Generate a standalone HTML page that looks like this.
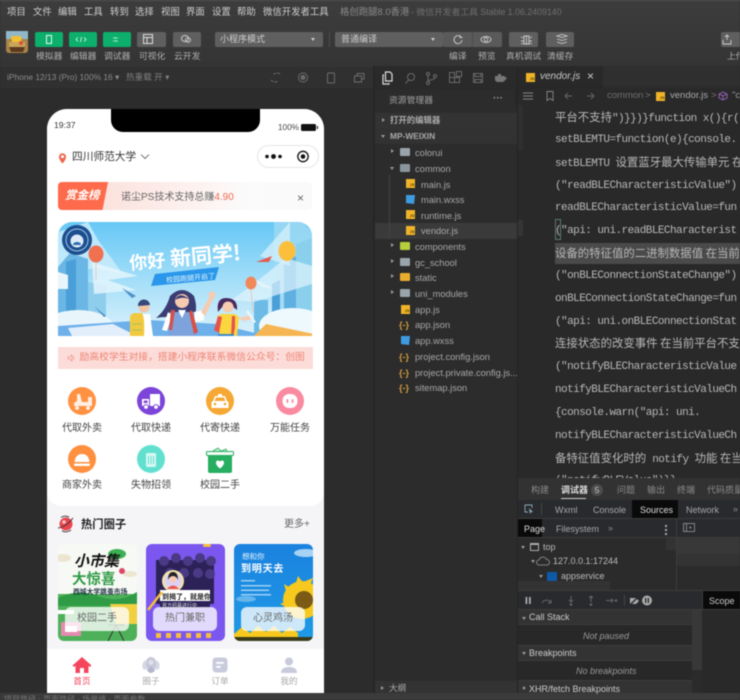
<!DOCTYPE html>
<html lang="zh-CN"><head><meta charset="utf-8"><title>微信开发者工具</title>
<style>
*{box-sizing:border-box;margin:0;padding:0}
html,body{width:740px;height:700px;overflow:hidden;background:#2c2c2c}
body{font-family:"Liberation Sans","Noto Sans CJK SC",sans-serif;position:relative;font-size:10px;color:#bbb}
#r{position:absolute;left:0;top:0;width:740px;height:700px;overflow:hidden;filter:blur(.4px)}
.a{position:absolute;white-space:nowrap;line-height:1}
.b{position:absolute}
.m{top:7px;font-size:9.4px;color:#cfcfcf}
.btn{position:absolute;top:32px;height:15px;border-radius:2px}
.g{background:#0cb06c}.k{background:#5f5f5f}
.l{top:52px;font-size:8.8px;color:#b0b0b0}
.f{position:absolute;font-size:9.3px;color:#a8a8a8;white-space:nowrap;line-height:12px;margin-top:1px}
.js{position:absolute;width:9px;height:9px;background:#f0b429;color:#5a4200;font-size:4px;line-height:11px;text-align:right;font-weight:bold;padding-right:.5px}
.dir{position:absolute;width:10px;height:8px;background:#99a4aa;border-radius:1px}
.ar{position:absolute;width:0;height:0;border-left:3px solid #999;border-top:2.5px solid transparent;border-bottom:2.5px solid transparent}
.ad{position:absolute;width:0;height:0;border-top:3px solid #999;border-left:2.5px solid transparent;border-right:2.5px solid transparent}
.br{position:absolute;font-size:9px;color:#d09c3c;font-weight:bold;line-height:12px;margin-top:1px}
.c{position:absolute;left:555px;font-family:"Liberation Mono","Noto Sans CJK SC",monospace;font-size:11px;letter-spacing:-.55px;color:#b8b8b8;white-space:nowrap;line-height:14px}
.c b{font-family:"Noto Sans CJK SC",sans-serif;font-weight:400;font-size:11.4px;letter-spacing:0}
.ic{position:absolute;width:28px;height:28px;border-radius:50%}
.lb{position:absolute;width:50px;text-align:center;font-size:10px;color:#444;line-height:12px}
.card{position:absolute;top:544px;width:79px;height:97px;border-radius:6px;overflow:hidden}
.ov{position:absolute;left:7px;top:63px;width:64px;height:24px;border-radius:6px;background:rgba(255,255,255,.78);text-align:center;line-height:24px;font-size:10px;color:#666}
.t{position:absolute;width:40px;text-align:center;font-size:8.6px;line-height:10px;color:#a8a8a8;top:676px}
.d{position:absolute;font-size:9px;color:#a8a8a8;white-space:nowrap;line-height:12px}
</style></head><body><div id="r">

<!-- top chrome -->
<div class="b" style="left:0;top:0;width:740px;height:67px;background:linear-gradient(#3d3d3d,#343434)"></div>
<div class="b" style="left:0;top:0;width:740px;height:1px;background:#555"></div>
<span class="a m" style="left:7px">项目</span><span class="a m" style="left:33px">文件</span><span class="a m" style="left:58px">编辑</span><span class="a m" style="left:84px">工具</span><span class="a m" style="left:110px">转到</span><span class="a m" style="left:135px">选择</span><span class="a m" style="left:161px">视图</span><span class="a m" style="left:186px">界面</span><span class="a m" style="left:212px">设置</span><span class="a m" style="left:237px">帮助</span><span class="a m" style="left:263px">微信开发者工具</span>
<span class="a m" style="left:340px;color:#8a8a8a">格创跑腿8.0香港</span>
<span class="a m" style="left:411px;color:#6f6f6f;font-size:8.8px;top:8px">- 微信开发者工具 Stable 1.06.2409140</span>

<!-- avatar -->
<svg class="b" style="left:6px;top:31px" width="22" height="22" viewBox="0 0 22 22"><rect width="22" height="22" rx="3" fill="#a8844a"/><rect y="0" width="22" height="8" fill="#8fb7c9"/><path d="M5 5h10l1 6H6z" fill="#f0c030"/><rect x="3" y="11" width="16" height="5" fill="#c9a55a"/><path d="M3 16h16l-2 5H5z" fill="#5c3a20"/><circle cx="15" cy="12" r="2" fill="#d9503c"/></svg>

<div class="btn g" style="left:35px;width:28px"></div>
<div class="btn g" style="left:69px;width:28px"></div>
<div class="btn g" style="left:103px;width:28px"></div>
<div class="btn k" style="left:137px;width:29px"></div>
<div class="btn k" style="left:173px;width:28px"></div>
<svg class="b" style="left:35px;top:32px" width="166" height="15" viewBox="0 0 166 15" fill="none" stroke="#e8f8f0" stroke-width="1">
<rect x="11.5" y="3.5" width="5" height="8"/>
<path d="M43 5.5l-2 2 2 2M46.500 5l-1 5M49 5.500l2 2-2 2" stroke-width=".8"/>
<path d="M78 6h5M83 9h-5M80 5v2M81 8v2" stroke-width=".7" opacity=".8"/>
<rect x="108.500" y="2.500" width="9" height="9" stroke="#ddd"/><path d="M108.500 5.500h9M112 5.500v6" stroke="#ddd"/>
<ellipse cx="150" cy="6.500" rx="3.500" ry="3" stroke="#ccc"/><ellipse cx="153" cy="8" rx="2.500" ry="2.200" stroke="#ccc"/>
</svg>
<span class="a l" style="left:36px">模拟器</span><span class="a l" style="left:70px">编辑器</span><span class="a l" style="left:104px">调试器</span><span class="a l" style="left:139px">可视化</span><span class="a l" style="left:174px">云开发</span>

<div class="btn k" style="left:215px;width:108px"></div>
<span class="a" style="left:220px;top:35px;font-size:9px;color:#ccc">小程序模式</span>
<div class="b" style="left:311px;top:38px;border-top:3px solid #ccc;border-left:2px solid transparent;border-right:2px solid transparent"></div>
<div class="b" style="left:329px;top:32px;width:1px;height:15px;background:#4c4c4c"></div>
<div class="btn k" style="left:335px;width:108px"></div>
<span class="a" style="left:341px;top:35px;font-size:9px;color:#ccc">普通编译</span>
<div class="b" style="left:431px;top:38px;border-top:3px solid #ccc;border-left:2px solid transparent;border-right:2px solid transparent"></div>
<div class="btn" style="left:443px;width:59px;background:#5a5a5a"></div>
<div class="b" style="left:472px;top:32px;width:1px;height:15px;background:#4c4c4c"></div>
<div class="btn k" style="left:509px;width:29px"></div>
<div class="btn k" style="left:546px;width:28px"></div>
<div class="btn k" style="left:721px;width:25px"></div>
<svg class="b" style="left:443px;top:32px" width="297" height="15" viewBox="0 0 297 15" fill="none" stroke="#ccc" stroke-width=".9">
<path d="M18 5a4 4 0 1 0 1 3M17 3v2.500h2.500"/>
<ellipse cx="43" cy="7.500" rx="5" ry="3"/><circle cx="43" cy="7.500" r="1.800"/>
<path d="M81 4h5v8h-5zM81 6l-3-1M81 9h-3M81 11l-3 1M86 6l3-1M86 9h3M86 11l3 1M83.500 4v8"/>
<path d="M114 4l5-1.500 5 1.500-5 1.500zM114 7l5 1.500 5-1.500M114 10l5 1.500 5-1.500"/>
<path d="M284 8v-5M282 5l2-2 2 2M280 8v4h8V8"/>
</svg>
<span class="a l" style="left:449px">编译</span><span class="a l" style="left:478px">预览</span><span class="a l" style="left:506px">真机调试</span><span class="a l" style="left:547px">清缓存</span><span class="a l" style="left:727px">上传</span>

<!-- device bar -->
<div class="b" style="left:0;top:67px;width:373px;height:21px;background:#303030"></div>
<span class="a" style="left:7px;top:73px;font-size:8.4px;color:#8b8b8b">iPhone 12/13 (Pro) 100% 16 ▾</span>
<span class="a" style="left:126px;top:73px;font-size:8.6px;color:#7f7f7f">热重载 开 ▾</span>
<svg class="b" style="left:265px;top:68px" width="105" height="19" viewBox="0 0 105 19" fill="none" stroke="#6c6c6c" stroke-width="1">
<path d="M15 6a5 5 0 0 0-7 1M6 12a5 5 0 0 0 7 1" stroke-dasharray="3 1"/>
<circle cx="38" cy="9.500" r="4.500"/><circle cx="38" cy="9.500" r="2" fill="#6c6c6c"/>
<rect x="62.500" y="5" width="7" height="10" rx="1"/>
<rect x="89.500" y="8" width="7" height="6"/><path d="M92 8V5.500h7V11h-2.500"/>
</svg>

<!-- simulator backdrop -->
<div class="b" style="left:0;top:88px;width:373px;height:605px;background:#2c2c2c"></div>
<div class="b" style="left:0;top:693px;width:740px;height:7px;background:#3b3b3b"></div>
<span class="a" style="left:4px;top:696px;font-size:8px;color:#777">项目路径 · 页面路径 · 场景值 · 页面参数</span>

<!-- phone -->
<div class="b" style="left:47px;top:109px;width:277px;height:584px;background:#f5f5f8;border-radius:20px 20px 0 0;overflow:hidden">
  <div class="b" style="left:0;top:0;width:277px;height:397px;background:#fff;border-radius:0 0 14px 14px"></div>
  <div class="b" style="left:0;top:540px;width:277px;height:44px;background:#fff"></div>
</div>
<div class="b" style="left:111px;top:109px;width:149px;height:23px;background:#000;border-radius:0 0 12px 12px"></div>
<span class="a" style="left:54px;top:121px;font-size:8.6px;color:#333">19:37</span>
<span class="a" style="left:278px;top:124px;font-size:8.2px;color:#444">100%</span>
<div class="b" style="left:301px;top:123.500px;width:15px;height:7px;background:#111;border:1px solid #111;border-radius:1.500px"></div>
<div class="b" style="left:316.500px;top:125.500px;width:1px;height:3px;background:#111"></div>

<svg class="b" style="left:58px;top:152px" width="9" height="12" viewBox="0 0 9 12"><path d="M4.500 11.500C2 8.500 1 6.800 1 4.700a3.500 3.500 0 0 1 7 0c0 2.100-1 3.800-3.500 6.800z" fill="#f0664d"/><circle cx="4.500" cy="4.600" r="1.500" fill="#fff"/></svg>
<span class="a" style="left:72px;top:152px;font-size:10.700px;color:#333">四川师范大学</span>
<svg class="b" style="left:140px;top:153px" width="10" height="7" viewBox="0 0 10 7" fill="none" stroke="#555" stroke-width=".8"><path d="M1 1.500l4 4 4-4"/></svg>
<div class="b" style="left:257px;top:145px;width:62px;height:23px;border-radius:12px;background:#fff;border:1px solid #e6e6e6"></div>
<svg class="b" style="left:262px;top:148px" width="54" height="17" viewBox="0 0 54 17"><circle cx="5" cy="8.500" r="1.800" fill="#111"/><circle cx="11.500" cy="8.500" r="2.400" fill="#111"/><circle cx="18" cy="8.500" r="1.800" fill="#111"/><circle cx="41" cy="8.500" r="5.200" fill="none" stroke="#111" stroke-width="1.300"/><circle cx="41" cy="8.500" r="2.300" fill="#111"/></svg>

<!-- rank bar -->
<div class="b" style="left:58px;top:182px;width:254px;height:28px;border-radius:4px;background:linear-gradient(90deg,#fce2dd 18%,#fdf0ee 50%,#fbfbfb 75%,#fafafa)"></div>
<div class="b" style="left:58px;top:182px;width:50px;height:28px;background:#fd6b4c;border-radius:4px 0 0 4px;clip-path:polygon(0 0,100% 0,89% 100%,0 100%)"></div>
<span class="a" style="left:65px;top:191px;font-size:11.500px;color:#fff;font-weight:bold;font-style:italic">赏金榜</span>
<span class="a" style="left:121px;top:192.500px;font-size:10px;color:#666">诺尘PS技术支持总赚<span style="color:#ef6a50">4.90</span></span>
<span class="a" style="left:297px;top:192px;font-size:12px;color:#666">×</span>

<!-- banner -->
<svg class="b" style="left:58px;top:222px" width="254" height="114" viewBox="0 0 254 114">
<defs><linearGradient id="sky" x1="0" y1="0" x2="0" y2="1"><stop offset="0" stop-color="#66c8f5"/><stop offset=".6" stop-color="#aee2f9"/><stop offset="1" stop-color="#dcf2fc"/></linearGradient>
<clipPath id="bc"><path d="M14 0H240a14 14 0 0 1 14 14V114H0V14A14 14 0 0 1 14 0z"/></clipPath></defs>
<g clip-path="url(#bc)">
<rect width="254" height="114" fill="url(#sky)"/>
<path d="M0 10L30 0l10 18 25 34-28-6-37 8z" fill="#c8ecfb" opacity=".85"/>
<path d="M0 45l12-14 18 6v77H0z" fill="#6ab6e4"/><path d="M8 40l10-3v77H8z" fill="#4a9fd8"/><path d="M30 60l18 4v50H30z" fill="#8fcdec"/><path d="M0 50l10 3v14H0z" fill="#e8f6fb"/>
<path d="M216 0h28l10 10v104h-38z" fill="#9fdaf2" opacity=".8"/><path d="M226 40l16-8v82h-16z" fill="#5fb0e0"/><path d="M238 22l16-6v98h-16z" fill="#8ad0ec"/><path d="M214 62l8-4v56h-8z" fill="#4a9fd8"/><path d="M196 78h14v36h-14z" fill="#6cbae6"/>
<path d="M254 62l-58 18-22-2 24-18 30-24 26 8z" fill="#dff4fc" opacity=".7"/><path d="M232 0l-30 34 30 10z" fill="#dbf2fb" opacity=".7"/>
<path d="M34 40l46 14-30 4 28 10-42 4z" fill="#e6f6fc" opacity=".8"/>
<ellipse cx="20" cy="106" rx="36" ry="18" fill="#e8f6fc"/><ellipse cx="235" cy="104" rx="34" ry="18" fill="#eef9fd"/>
<path d="M0 104l90-6 70 4 50 12H0z" fill="#6db0ea"/><path d="M10 106l45-4 24 12H14z" fill="#fff" opacity=".8"/>
<path d="M196 114l12-12 48 10v2z" fill="#f6b553"/>
<path d="M64 66l14 8-4 2-10-10zM36 84l12 10-2 1z" fill="#4f8fc8"/><path d="M196 57l20 10-12-2z" fill="#e5f4fb"/><path d="M198 40l16-6-3 6z" fill="#e65c4d"/>
<ellipse cx="38" cy="32" rx="7.500" ry="8.500" fill="#ef7150"/><path d="M38 40v18" stroke="#e9b39c" stroke-width=".6" fill="none"/>
<ellipse cx="229" cy="29" rx="8.500" ry="10" fill="#fbbf3c"/>
<ellipse cx="193" cy="61" rx="5.500" ry="6.500" fill="#f0885a"/><path d="M193 68l2 22" stroke="#e9b39c" stroke-width=".6" fill="none"/>
<circle cx="19" cy="18" r="15" fill="#1d4e8e"/><circle cx="19" cy="18" r="11" fill="none" stroke="#9cc9e8" stroke-width="1"/><circle cx="19" cy="19" r="6.500" fill="#dcebf7"/><path d="M15 23c0-4 8-4 8 0z" fill="#2d6cb0"/>
<g transform="rotate(-5 125 35)" font-family="Noto Sans CJK SC,sans-serif" font-weight="bold" fill="#fff"><text x="71" y="43" font-size="18">你好</text><text x="112" y="43" font-size="21">新同学!</text></g>
<path d="M97 52l64-7-4 13-64 6z" fill="#2a97ea"/>
<text x="108" y="59" font-size="7" fill="#dff3ff" transform="rotate(-5 125 55)" font-family="Noto Sans CJK SC,sans-serif">校园跑腿开启了</text>
<!-- boy -->
<circle cx="86" cy="85" r="5.500" fill="#f2c4a6"/><path d="M80 84a6 6 0 0 1 12-1z" fill="#35487a"/><path d="M80 92h12l3 22H79z" fill="#fff"/><path d="M72 96q0-5 6-5h6q3 5 2 23H72z" fill="#f1c93f"/><path d="M74 102h10M74 108h10" stroke="#a5c45a" stroke-width="1"/>
<!-- girl -->
<path d="M112 74q12-12 24 0 5 16-2 22h-18q-8-2-18 0 10-8 14-22z" fill="#3a3d74"/><circle cx="124" cy="79" r="7" fill="#f6cbb0"/><path d="M117 78q4-9 14-1-7-3-14 1z" fill="#3a3d74"/>
<path d="M112 90h24l2 24h-28z" fill="#7ea2dc"/><path d="M120 88h8l-4 8z" fill="#fff"/><path d="M110 90l-6 18 5 1 5-16zM136 90l10-2 0 10-9 2z" fill="#fff"/><path d="M134 88l6 22-4 2-5-22zM113 88l-2 20 3 0 3-20z" fill="#d84f45"/><path d="M143 90l9-16 4 1-9 19z" fill="#f6cbb0"/><circle cx="154" cy="73" r="3.500" fill="#f6cbb0"/>
<!-- girl 2 -->
<path d="M160 90q-2-14 8-14 12 0 11 12l-5-4h-9z" fill="#4a2a5e"/><circle cx="170" cy="85" r="5.500" fill="#f6cbb0"/><path d="M159 95l4-3h14l4 3-2 19h-17z" fill="#fcd63f"/><path d="M160 94l-4 14 5 3 3-16zM177 94v12l-2 8-2 0 1-20z" fill="#e5544a"/><path d="M160 114h16v-2h-16z" fill="#3a8ac8"/><path d="M180 96l10-2-1-3 5 6-8 2z" fill="#f6cbb0"/><path d="M190 88l8 12-2 1-8-11z" fill="#eaf6fb"/>
</g></svg>

<!-- notice -->
<div class="b" style="left:58px;top:347px;width:255px;height:22px;background:#fcdcd8;overflow:hidden">
<svg class="b" style="left:9px;top:7px" width="9" height="8" viewBox="0 0 9 8" fill="none" stroke="#f0998c" stroke-width=".8"><path d="M1 3h1.500L5 1v6L2.500 5H1zM6.500 2.500q1 1.500 0 3" /></svg>
<span class="a" style="left:21.500px;top:6px;font-size:9.800px;color:#ee8577">励高校学生对接，搭建小程序联系微信公众号：创图</span></div>

<!-- icons -->
<div class="ic" style="left:68px;top:387px;background:#ff9142"></div>
<svg class="b" style="left:68px;top:387px" width="28" height="28" viewBox="0 0 28 28" fill="#fff" opacity=".85"><path d="M9 7l3 0 2 8h6v-5h4v9H6v-3l3-2zM9 19a2 2 0 1 0 .1 0zM20 19a2 2 0 1 0 .1 0z"/></svg>
<div class="ic" style="left:137px;top:387px;background:#7d44d9"></div>
<svg class="b" style="left:137px;top:387px" width="28" height="28" viewBox="0 0 28 28"><path d="M13 7h10v12H13z" fill="#fff"/><path d="M5 12h7v7H5z" fill="#fff"/><circle cx="9" cy="20" r="2.400" fill="#fff" stroke="#7d44d9"/><circle cx="19" cy="20" r="2.400" fill="#fff" stroke="#7d44d9"/><path d="M7 13.500h3.500v2.500H6.500z" fill="#7d44d9"/></svg>
<div class="ic" style="left:206px;top:387px;background:#f5a833"></div>
<svg class="b" style="left:206px;top:387px" width="28" height="28" viewBox="0 0 28 28"><path d="M12 7h4v2h-4zM9 9h10l2 5 1.500 1v6H5.500v-6L7 14z" fill="#fff"/><path d="M10 10.500h8l1.300 3.500H8.700z" fill="#f5a833"/><circle cx="9" cy="17" r="1.300" fill="#f5a833"/><circle cx="19" cy="17" r="1.300" fill="#f5a833"/></svg>
<div class="ic" style="left:276px;top:387px;background:#f98aa0"></div>
<svg class="b" style="left:276px;top:387px" width="28" height="28" viewBox="0 0 28 28"><rect x="6.500" y="7" width="15" height="14" rx="6.500" fill="#fff"/><rect x="10.500" y="12" width="1.800" height="4" rx=".9" fill="#f98aa0"/><rect x="15.700" y="12" width="1.800" height="4" rx=".9" fill="#f98aa0"/></svg>
<div class="ic" style="left:68px;top:445px;background:#ff903f"></div>
<svg class="b" style="left:68px;top:445px" width="28" height="28" viewBox="0 0 28 28" fill="#fff"><path d="M6.500 17q1-8 7.500-8t7.500 8z"/><rect x="6" y="18.500" width="16" height="2.500" rx="1"/></svg>
<div class="ic" style="left:137px;top:445px;background:#62e0cf"></div>
<svg class="b" style="left:137px;top:445px" width="28" height="28" viewBox="0 0 28 28"><rect x="9" y="8" width="10" height="14" rx="1.500" fill="#fff" opacity=".75"/><path d="M12 8V6h4v2M11.500 11v8M14 11v8M16.500 11v8" stroke="#62e0cf" fill="none"/></svg>
<svg class="b" style="left:206px;top:445px" width="28" height="29" viewBox="0 0 28 29"><path d="M7 6l5-3 3 3 5-2 2 4H6z" fill="#bfeed4" stroke="#27ae60" stroke-width=".8"/><rect x="0.500" y="6.500" width="27" height="4" rx="1" fill="#f3fbf6" stroke="#27ae60"/><path d="M2 10h24v16a2 2 0 0 1-2 2H4a2 2 0 0 1-2-2z" fill="#27ae60"/><path d="M14 23.500c-5-3.500-5-8-2-8 1 0 1.700.6 2 1.300.3-.7 1-1.300 2-1.300 3 0 3 4.500-2 8z" fill="#fff"/></svg>
<span class="lb" style="left:57px;top:422.500px">代取外卖</span><span class="lb" style="left:126px;top:422.500px">代取快递</span><span class="lb" style="left:195px;top:422.500px">代寄快递</span><span class="lb" style="left:265px;top:422.500px">万能任务</span>
<span class="lb" style="left:57px;top:479.500px">商家外卖</span><span class="lb" style="left:126px;top:479.500px">失物招领</span><span class="lb" style="left:195px;top:479.500px">校园二手</span>

<!-- hot -->
<svg class="b" style="left:57px;top:515px" width="18" height="18" viewBox="0 0 18 18"><circle cx="9" cy="9" r="6.500" fill="#e8464e"/><path d="M1 13Q9 12 16 3" fill="none" stroke="#333" stroke-width="1"/><path d="M4 2.500a8 8 0 0 1 8-.5M14 15a8 8 0 0 1-9 .8" fill="none" stroke="#444" stroke-width="1"/><circle cx="7" cy="7" r="1.800" fill="#f9c6c8"/></svg>
<span class="a" style="left:81px;top:519.500px;font-size:11.300px;font-weight:bold;color:#222">热门圈子</span>
<span class="a" style="left:284px;top:519.500px;font-size:10px;color:#666">更多+</span>

<div class="card" style="left:58px;background:#f7f9f4">
<svg class="b" style="left:0;top:0" width="79" height="97" viewBox="0 0 79 97">
<rect y="50" width="79" height="47" fill="#4fb05a"/><path d="M0 54q20-10 40-2t39-4v14H0z" fill="#2f9b45"/><path d="M52 60h27v20H58z" fill="#f0d040"/><path d="M0 66h16v4h-16z" fill="#fff"/><rect x="3" y="78" width="20" height="14" fill="#e58ab0"/><rect x="7" y="82" width="12" height="6" fill="#fff"/><path d="M50 97l8-16 8 16M50 81h16" stroke="#333" fill="none"/>
<ellipse cx="5" cy="14" rx="8" ry="4" fill="#ece6d0"/><ellipse cx="72" cy="30" rx="7" ry="3" fill="#ece6d0"/><ellipse cx="59" cy="10" rx="9" ry="5" fill="#3cb054"/>
<text x="16" y="22" font-size="15" font-weight="bold" fill="#111" font-style="italic" font-family="Noto Sans CJK SC,sans-serif">小市集</text>
<text x="14" y="40" font-size="14.500" font-weight="bold" fill="#2f9b45" font-family="Noto Sans CJK SC,sans-serif">大惊喜</text>
<text x="15" y="50" font-size="6.800" font-weight="bold" fill="#234" font-family="Noto Sans CJK SC,sans-serif">西城大学跳蚤市场</text>
<circle cx="64" cy="27" r="3" fill="#e0456a"/></svg>
<div class="ov">校园二手</div></div>

<div class="card" style="left:146px;background:#7b57f0">
<svg class="b" style="left:0;top:0" width="79" height="97" viewBox="0 0 79 97">
<rect x="10" y="16" width="58" height="44" fill="#2c2258"/>
<g fill="#4a3a85"><circle cx="18" cy="17" r="5"/><circle cx="30" cy="14" r="5"/><circle cx="42" cy="17" r="5"/><circle cx="54" cy="14" r="5"/><circle cx="65" cy="17" r="5"/><circle cx="24" cy="29" r="5"/><circle cx="38" cy="29" r="5"/><circle cx="52" cy="29" r="5"/><circle cx="64" cy="30" r="5"/></g>
<circle cx="27" cy="37" r="11" fill="#f0e4a8"/><circle cx="27" cy="37" r="8.500" fill="#ddd0f5"/><circle cx="27" cy="35" r="3.500" fill="#f6cbb0"/><path d="M22 36q0-8 5-8t5 8l-1-2q-4-4-8 0z" fill="#222"/><path d="M21 45q6-7 12 0z" fill="#e55"/>
<rect x="14" y="46" width="50" height="11" fill="#fff"/><text x="16" y="55" font-size="7" font-weight="bold" fill="#222" font-family="Noto Sans CJK SC,sans-serif">到揭了，就是你</text>
<rect x="14" y="57" width="50" height="7" fill="#2c2258"/><text x="16" y="63" font-size="5" fill="#ddd" font-family="Noto Sans CJK SC,sans-serif">官方招募进行中</text>
<path d="M2 66l14-18" stroke="#f5be3c" stroke-width="2.500"/><rect x="57" y="0" width="8" height="3" rx="1.500" fill="#f5be3c"/>
<g fill="#f5be3c"><rect x="10" y="89" width="5" height="5"/><rect x="20" y="89" width="5" height="5"/><rect x="30" y="89" width="5" height="5"/><rect x="40" y="89" width="5" height="5"/><rect x="50" y="89" width="5" height="5"/><rect x="60" y="89" width="5" height="5"/></g></svg>
<div class="ov">热门兼职</div></div>

<div class="card" style="left:234px;background:linear-gradient(#1b82df,#1f9be6)">
<svg class="b" style="left:0;top:0" width="79" height="97" viewBox="0 0 79 97">
<ellipse cx="72" cy="9" rx="12" ry="4" fill="#d5ecfa" opacity=".75"/><ellipse cx="12" cy="55" rx="10" ry="3" fill="#d5ecfa" opacity=".4"/>
<text x="8" y="15" font-size="7.500" fill="#e8f5ff" font-family="Noto Sans CJK SC,sans-serif">想和你</text>
<text x="7" y="28" font-size="10" font-weight="bold" fill="#fff" letter-spacing=".8" font-family="Noto Sans CJK SC,sans-serif">到明天去</text>
<g fill="#bfe0f8" opacity=".8"><rect x="7" y="36" width="14" height="1.500"/><rect x="7" y="41" width="30" height="1.500"/><rect x="7" y="45.500" width="28" height="1.500"/><rect x="7" y="50" width="30" height="1.500"/></g>
<g fill="#f7c81e"><circle cx="68" cy="56" r="19"/><path d="M50 40l10 6-6 8zM64 32l6 8-9 2zM79 34l-4 10-6-6zM46 60l10-4 1 9z"/><path d="M0 90l8-7 8 6 8-7 8 6 8-6 8 7 8-6 8 6v10H0z"/></g>
<circle cx="70" cy="56" r="9" fill="#7a5a14"/><rect x="0" y="93" width="79" height="4" fill="#3a3a18"/></svg>
<div class="ov">心灵鸡汤</div></div>

<!-- tabs -->
<svg class="b" style="left:72px;top:656px" width="20" height="18" viewBox="0 0 20 18"><path d="M10 1L.5 9.500 2 11l1.500-1.300V17h4.500v-5h4v5h4.500V9.700L18 11l1.500-1.500z" fill="#f5455c"/></svg>
<svg class="b" style="left:141px;top:656px" width="20" height="18" viewBox="0 0 20 18"><path d="M4 4q-4 4-2 9l3 1 1-6zM16 4q4 4 2 9l-3 1-1-6z" fill="#d7d8e4"/><path d="M10 1a5 5 0 0 1 5 5c0 5-1 11-5 11S5 11 5 6a5 5 0 0 1 5-5z" fill="#c6c7d8"/><circle cx="10" cy="6.500" r="2.500" fill="#dfe0ea"/><path d="M6 15l4-5 4 5-4 2z" fill="#b5b6cc"/></svg>
<svg class="b" style="left:212px;top:657px" width="16" height="16" viewBox="0 0 16 16"><rect x=".5" y=".5" width="15" height="15" rx="3.500" fill="#c9cbdc"/><rect x="4" y="5" width="8" height="1.800" rx=".9" fill="#fff"/><rect x="4" y="9" width="5" height="1.800" rx=".9" fill="#fff"/></svg>
<svg class="b" style="left:281px;top:657px" width="16" height="16" viewBox="0 0 16 16" fill="#c9cbdc"><circle cx="8" cy="4.500" r="4"/><path d="M0 16q0-6 8-6t8 6z"/></svg>
<span class="t" style="left:62px;color:#f5455c">首页</span><span class="t" style="left:131px">圈子</span><span class="t" style="left:200px">订单</span><span class="t" style="left:269px">我的</span>

<!-- divider -->
<div class="b" style="left:373px;top:66px;width:2px;height:627px;background:#262626"></div>

<!-- activity row -->
<div class="b" style="left:375px;top:66px;width:142px;height:24px;background:#2a2a2a"></div>
<svg class="b" style="left:380px;top:70px" width="130" height="16" viewBox="0 0 130 16" fill="none" stroke="#6a6a6a" stroke-width="1">
<path d="M4 5h-1v9h6v-1M5.500 2H10l2 2v7H5.500z" stroke="#ddd" stroke-width="1.200"/>
<circle cx="31" cy="7" r="3.500"/><path d="M28.500 10l-3 3.500"/>
<circle cx="48" cy="4" r="1.500"/><circle cx="48" cy="13" r="1.500"/><circle cx="55" cy="6" r="1.500"/><path d="M48 5.500v6M55 7.500q0 2-7 3"/>
<rect x="69.500" y="7.500" width="5" height="5"/><rect x="74.500" y="7.500" width="5" height="5"/><rect x="69.500" y="2.500" width="5" height="5"/><rect x="76.500" y="1.500" width="5" height="5"/>
<rect x="93.500" y="3.500" width="9" height="9"/><path d="M95 3.500v3h6v-3M95 12.500v-3h6v3"/>
<path d="M115 6h10v3q0 3-3 3h-4q-3 0-3-3zM125 7.500h2l-1 2-1 .5M118 4h3v2h-3z" fill="#777" stroke="none"/>
</svg>

<!-- explorer -->
<div class="b" style="left:375px;top:90px;width:142px;height:603px;background:#2c2c2c"></div>
<span class="a" style="left:389px;top:96px;font-size:8.800px;color:#a0a0a0">资源管理器</span>
<span class="a" style="left:493px;top:94px;font-size:10px;color:#999;font-weight:bold">···</span>
<div class="b" style="left:375px;top:113px;width:142px;height:15px;background:#333"></div>
<div class="b" style="left:375px;top:128px;width:142px;height:16px;background:#323232"></div>
<div class="ar" style="left:382px;top:118px"></div>
<span class="a" style="left:390px;top:116px;font-size:8.400px;color:#aaa;font-weight:bold">打开的编辑器</span>
<div class="ad" style="left:381px;top:135px"></div>
<span class="a" style="left:390px;top:132px;font-size:8.400px;color:#aaa;font-weight:bold">MP-WEIXIN</span>
<div class="b" style="left:375px;top:222.500px;width:142px;height:16px;background:#3a3a3a"></div>
<div class="b" style="left:389px;top:175px;width:1px;height:63px;background:#444"></div>

<div class="ar" style="left:391px;top:149px"></div><div class="dir" style="left:400px;top:148px"></div><span class="f" style="left:415px;top:146px">colorui</span>
<div class="ad" style="left:390px;top:167px"></div><div class="dir" style="left:400px;top:164px;background:#8a969d"></div><span class="f" style="left:415px;top:162px">common</span>
<div class="js" style="left:406px;top:179px">JS</div><span class="f" style="left:421px;top:178px">main.js</span>
<div class="b" style="left:406px;top:195px;width:9px;height:9px;background:#3f9be0;clip-path:polygon(0 0,100% 0,90% 100%,0 90%)"></div><span class="f" style="left:421px;top:193px">main.wxss</span>
<div class="js" style="left:406px;top:210px">JS</div><span class="f" style="left:421px;top:209px">runtime.js</span>
<div class="js" style="left:406px;top:226px">JS</div><span class="f" style="left:421px;top:224px">vendor.js</span>
<div class="ar" style="left:391px;top:243px"></div><div class="dir" style="left:400px;top:242px;background:#b7cf3c"></div><span class="f" style="left:415px;top:240px">components</span>
<div class="ar" style="left:391px;top:259px"></div><div class="dir" style="left:400px;top:258px"></div><span class="f" style="left:415px;top:256px">gc_school</span>
<div class="ar" style="left:391px;top:274px"></div><div class="dir" style="left:400px;top:273px;background:#e9ad2e"></div><span class="f" style="left:415px;top:271px">static</span>
<div class="ar" style="left:391px;top:290px"></div><div class="dir" style="left:400px;top:289px"></div><span class="f" style="left:415px;top:287px">uni_modules</span>
<div class="js" style="left:401px;top:305px">JS</div><span class="f" style="left:415px;top:303px">app.js</span>
<span class="br" style="left:399px;top:318px">{-}</span><span class="f" style="left:415px;top:318px">app.json</span>
<div class="b" style="left:401px;top:336px;width:9px;height:9px;background:#3f9be0;clip-path:polygon(0 0,100% 0,90% 100%,0 90%)"></div><span class="f" style="left:415px;top:334px">app.wxss</span>
<span class="br" style="left:399px;top:350px">{-}</span><span class="f" style="left:415px;top:350px">project.config.json</span>
<span class="br" style="left:399px;top:366px">{-}</span><span class="f" style="left:415px;top:366px">project.private.config.js...</span>
<span class="br" style="left:399px;top:381px">{-}</span><span class="f" style="left:415px;top:381px">sitemap.json</span>
<div class="b" style="left:375px;top:681px;width:142px;height:12px;background:#333"></div>
<div class="ar" style="left:381px;top:686px"></div>
<span class="a" style="left:389px;top:684px;font-size:8.600px;color:#aaa">大纲</span>

<!-- editor -->
<div class="b" style="left:517px;top:66px;width:223px;height:22px;background:#2f2f2f"></div>
<div class="b" style="left:517px;top:66px;width:86px;height:22px;background:#292929"></div>
<div class="js" style="left:526px;top:73px">JS</div>
<span class="a" style="left:540px;top:72px;font-size:10px;font-style:italic;color:#c8c8c8">vendor.js</span>
<span class="a" style="left:587px;top:70px;font-size:12px;color:#ccc">×</span>
<div class="b" style="left:517px;top:88px;width:223px;height:17px;background:#292929;box-shadow:0 1px 3px #1c1c1c"></div>
<svg class="b" style="left:520px;top:89px" width="80" height="14" viewBox="0 0 80 14" fill="none" stroke="#888" stroke-width=".9"><path d="M3 4h10M3 7h10M3 10h10"/><path d="M27 2.500h6v9l-3-2-3 2z"/><path d="M52 7h-7M48 4l-3 3 3 3M67 7h7M71 4l3 3-3 3" stroke="#666"/></svg>
<span class="a" style="left:607px;top:91px;font-size:9.500px;color:#6f6f6f">common</span><span class="a" style="left:645px;top:91px;font-size:9.500px;color:#777">&gt;</span>
<div class="js" style="left:656px;top:92px">JS</div>
<span class="a" style="left:670px;top:91px;font-size:9.500px;color:#a8a8a8">vendor.js</span><span class="a" style="left:711px;top:91px;font-size:9.500px;color:#777">&gt;</span>
<svg class="b" style="left:718px;top:91px" width="10" height="10" viewBox="0 0 10 10" fill="none" stroke="#8e5fb0"><path d="M5 1l4 2v4L5 9 1 7V3zM1 3l4 2 4-2M5 5v4"/></svg>
<span class="a" style="left:732px;top:91px;font-size:9.500px;color:#999">"c</span>

<div class="b" style="left:517px;top:105px;width:223px;height:373px;background:#292929;overflow:hidden"></div>
<div class="b" style="left:517px;top:105px;width:6px;height:45px;background:#2f2f2f"></div>
<div class="b" style="left:517px;top:220px;width:6px;height:16px;background:#353535"></div>
<div class="b" style="left:555px;top:243px;width:185px;height:21px;background:#4a4a4a"></div>
<div class="b" style="left:555px;top:219px;width:6px;height:21px;border:1px solid #5c7a68"></div>
<div class="c" style="top:110px"><b>平台不支持</b>")}})}function x(){r("</div>
<div class="c" style="top:133px">setBLEMTU=function(e){console.</div>
<div class="c" style="top:155px">setBLEMTU <b>设置蓝牙最大传输单元 在</b></div>
<div class="c" style="top:179px">("readBLECharacteristicValue")</div>
<div class="c" style="top:201px">readBLECharacteristicValue=fun</div>
<div class="c" style="top:224px">("api: uni.readBLECharacterist</div>
<div class="c" style="top:246px"><b>设备的特征值的二进制数据值 在当前</b></div>
<div class="c" style="top:269px">("onBLEConnectionStateChange")</div>
<div class="c" style="top:292px">onBLEConnectionStateChange=fun</div>
<div class="c" style="top:315px">("api: uni.onBLEConnectionStat</div>
<div class="c" style="top:336px"><b>连接状态的改变事件 在当前平台不支</b></div>
<div class="c" style="top:360px">("notifyBLECharacteristicValue</div>
<div class="c" style="top:383px">notifyBLECharacteristicValueCh</div>
<div class="c" style="top:406px">{console.warn("api: uni.</div>
<div class="c" style="top:429px">notifyBLECharacteristicValueCh</div>
<div class="c" style="top:451px"><b>备特征值变化时的</b> notify <b>功能 在当</b></div>
<div class="c" style="top:474px">("notifyBLEValue")}}</div>

<!-- bottom panel -->
<div class="b" style="left:517px;top:478px;width:223px;height:215px;background:#2b2b2b"></div>
<div class="b" style="left:517px;top:478px;width:223px;height:22px;background:#323232"></div>
<span class="d" style="left:531px;top:484px;color:#8a8a8a">构建</span>
<span class="d" style="left:561px;top:484px;color:#ddd;font-weight:bold">调试器</span>
<div class="b" style="left:561px;top:498px;width:25px;height:1px;background:#ccc"></div>
<div class="b" style="left:591px;top:484px;width:12px;height:12px;border-radius:50%;background:#4c4c4c;color:#ccc;font-size:8.500px;text-align:center;line-height:12px">5</div>
<span class="d" style="left:617px;top:484px;color:#8a8a8a">问题</span><span class="d" style="left:647px;top:484px;color:#8a8a8a">输出</span><span class="d" style="left:677px;top:484px;color:#8a8a8a">终端</span><span class="d" style="left:707px;top:484px;color:#8a8a8a">代码质量</span>

<div class="b" style="left:517px;top:500px;width:223px;height:19px;background:#292a2d;border-bottom:1px solid #3c3c3c"></div>
<svg class="b" style="left:523px;top:503px" width="12" height="12" viewBox="0 0 12 12" fill="none" stroke="#8ab" stroke-width=".9"><path d="M9 5V2H2v7h3"/><path d="M6 5l4 4-2 .3L7 11z" fill="#8ab" stroke="none"/></svg>
<div class="b" style="left:541px;top:503px;width:1px;height:12px;background:#444"></div>
<div class="b" style="left:632px;top:500px;width:46px;height:18px;background:#0a0a0a"></div>
<span class="d" style="left:555px;top:504px">Wxml</span><span class="d" style="left:593px;top:504px">Console</span><span class="d" style="left:640px;top:504px;color:#ddd">Sources</span><span class="d" style="left:686px;top:504px">Network</span><span class="d" style="left:733px;top:503px;color:#888">»</span>

<div class="b" style="left:517px;top:519px;width:223px;height:19px;background:#292a2d;border-bottom:1px solid #3c3c3c"></div>
<div class="b" style="left:517px;top:519px;width:25px;height:18px;background:#0a0a0a"></div>
<span class="d" style="left:524px;top:523px;color:#ddd">Page</span><span class="d" style="left:556px;top:523px">Filesystem</span><span class="d" style="left:608px;top:522px;color:#888">»</span>
<div class="b" style="left:665px;top:525px;width:2px;height:2px;background:#aaa;box-shadow:0 4px #aaa,0 8px #aaa"></div>
<div class="b" style="left:676px;top:519px;width:1px;height:72px;background:#3c3c3c"></div>
<svg class="b" style="left:683px;top:523px" width="12" height="10" viewBox="0 0 12 10" fill="none" stroke="#999" stroke-width=".8"><rect x=".5" y=".5" width="11" height="8"/><path d="M3.500 .5v8"/><path d="M8 3v3L6 4.500z" fill="#999" stroke="none"/></svg>

<div class="b" style="left:677px;top:538px;width:63px;height:16px;background:#383838"></div>
<div class="b" style="left:677px;top:554px;width:63px;height:12px;background:#333"></div>
<div class="b" style="left:666px;top:538px;width:10px;height:12px;background:#333"></div>
<div class="ad" style="left:521px;top:546px"></div>
<div class="b" style="left:530px;top:543px;width:9px;height:8px;border:1px solid #aaa;border-top-width:2px"></div>
<span class="d" style="left:543px;top:541px;color:#bbb">top</span>
<div class="ad" style="left:531px;top:560px"></div>
<svg class="b" style="left:536px;top:556px" width="14" height="10" viewBox="0 0 14 10" fill="none" stroke="#999" stroke-width=".8"><path d="M3 9a2.500 2.500 0 0 1 0-5 4 4 0 0 1 7.500-.5A2.700 2.700 0 0 1 11 9z"/></svg>
<span class="d" style="left:553px;top:555px;color:#bbb">127.0.0.1:17244</span>
<div class="ad" style="left:539px;top:575px"></div>
<div class="b" style="left:547px;top:572px;width:10px;height:9px;background:#0e5aa8;border-radius:1px"></div>
<span class="d" style="left:561px;top:570px;color:#bbb">appservice</span>
<div class="b" style="left:517px;top:581px;width:93px;height:9px;background:#333"></div>
<div class="b" style="left:517px;top:590px;width:223px;height:1px;background:#3c3c3c"></div>

<div class="b" style="left:517px;top:591px;width:223px;height:19px;background:#292a2d;border-bottom:1px solid #3c3c3c"></div>
<div class="b" style="left:702px;top:591px;width:38px;height:18px;background:#0a0a0a"></div>
<span class="d" style="left:709px;top:595px;color:#ccc">Scope</span>
<svg class="b" style="left:522px;top:593px" width="130" height="15" viewBox="0 0 130 15" fill="#7a7a7a"><rect x="3.500" y="4" width="1.800" height="7" fill="#aaa"/><rect x="7" y="4" width="1.800" height="7" fill="#aaa"/><path d="M20 10a5 5 0 0 1 9 0M29 7v3h-3" fill="none" stroke="#666"/><path d="M49 3v6M47 7l2 2 2-2" fill="none" stroke="#666"/><circle cx="49" cy="11.500" r="1.300" fill="#666"/><path d="M69 9V3M67 5l2-2 2 2" fill="none" stroke="#666"/><circle cx="69" cy="11.500" r="1.300" fill="#666"/><path d="M84 7.500h7M89 5.500l2 2-2 2" fill="none" stroke="#666"/><circle cx="94" cy="7.500" r="1.300" fill="#666"/><rect x="102" y="2" width="1" height="11" fill="#444"/><path d="M108 5h6l3 3-3 3h-6z" fill="#aaa"/><path d="M107 13L118 2" stroke="#292a2d" stroke-width="1.500"/><circle cx="125" cy="7.500" r="5" fill="#aaa"/><rect x="123" y="5" width="1.300" height="5" fill="#292a2d"/><rect x="125.700" y="5" width="1.300" height="5" fill="#292a2d"/></svg>

<div class="b" style="left:517px;top:610px;width:175px;height:83px;background:#282828"></div>
<div class="b" style="left:692px;top:610px;width:10px;height:60px;background:#383838"></div>
<div class="b" style="left:701.500px;top:591px;width:1px;height:102px;background:#3c3c3c"></div>
<div class="b" style="left:517px;top:610px;width:175px;height:15px;background:#333;border-bottom:1px solid #3c3c3c"></div>
<div class="ad" style="left:522px;top:617px"></div><span class="d" style="left:529px;top:611px;color:#ccc">Call Stack</span>
<span class="d" style="left:583px;top:630px;font-style:italic;color:#999">Not paused</span>
<div class="b" style="left:517px;top:645px;width:175px;height:16px;background:#333;border-top:1px solid #3c3c3c;border-bottom:1px solid #3c3c3c"></div>
<div class="ad" style="left:522px;top:652px"></div><span class="d" style="left:529px;top:647px;color:#ccc">Breakpoints</span>
<span class="d" style="left:576px;top:665px;font-style:italic;color:#999">No breakpoints</span>
<div class="b" style="left:517px;top:680px;width:175px;height:13px;background:#333;border-top:1px solid #3c3c3c"></div>
<div class="ar" style="left:523px;top:686px"></div><span class="d" style="left:529px;top:683px;color:#ccc">XHR/fetch Breakpoints</span>
<div class="b" style="left:702px;top:610px;width:38px;height:83px;background:#292929"></div>
<div class="b" style="left:517px;top:66px;width:1px;height:627px;background:#242424"></div>

</div></body></html>
